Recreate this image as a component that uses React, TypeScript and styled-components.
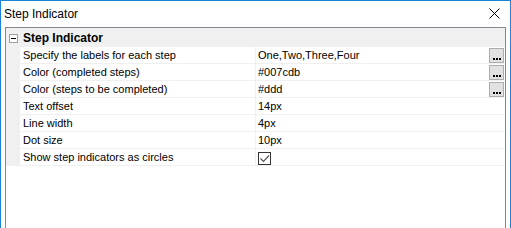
import styled, { createGlobalStyle } from 'styled-components'

const GlobalStyle = createGlobalStyle`
  html, body {
    margin: 0;
    padding: 0;
    background: #ffffff;
    overflow: hidden;
  }
  body {
    font-family: "Liberation Sans", Arial, sans-serif;
  }
`

const rows = [
  { label: 'Specify the labels for each step', value: 'One,Two,Three,Four', button: true },
  { label: 'Color (completed steps)', value: '#007cdb', button: true },
  { label: 'Color (steps to be completed)', value: '#ddd', button: true },
  { label: 'Text offset', value: '14px' },
  { label: 'Line width', value: '4px' },
  { label: 'Dot size', value: '10px' },
  { label: 'Show step indicators as circles', checkbox: true },
]

const App = () => {
  return (
    <Window>
      <GlobalStyle />
      <TitleBar>
        <Title>Step Indicator</Title>
        <CloseButton>
          <svg width="11" height="11" viewBox="0 0 11 11">
            <path d="M0.5 0.5 L10.5 10.5 M10.5 0.5 L0.5 10.5" stroke="#000" strokeWidth="1" />
          </svg>
        </CloseButton>
      </TitleBar>
      <Body>
        <Grid>
          <CategoryRow>
            <Gutter>
              <Toggle>
                <span />
              </Toggle>
            </Gutter>
            <CategoryLabel>Step Indicator</CategoryLabel>
          </CategoryRow>
          {rows.map((row) => (
            <Row key={row.label}>
              <Gutter />
              <LabelCell>{row.label}</LabelCell>
              <ValueCell>
                {row.checkbox ? (
                  <Checkbox>
                    <svg width="11" height="11" viewBox="0 0 11 11">
                      <path d="M1.5 5.5 L4.5 8.5 L10 2.5" stroke="#555" strokeWidth="1.2" fill="none" />
                    </svg>
                  </Checkbox>
                ) : (
                  <ValueText>{row.value}</ValueText>
                )}
                {row.button && (
                  <EllipsisButton>
                    <Dot />
                    <Dot />
                    <Dot />
                  </EllipsisButton>
                )}
              </ValueCell>
            </Row>
          ))}
        </Grid>
      </Body>
    </Window>
  )
}

const Window = styled.div`
  width: 511px;
  height: 228px;
  box-sizing: border-box;
  border: 1px solid #1883d7;
  border-bottom: none;
  background: #ffffff;
  display: flex;
  flex-direction: column;
`

const TitleBar = styled.div`
  height: 26px;
  display: flex;
  align-items: center;
  justify-content: space-between;
  padding: 0 10px 0 3px;
`

const Title = styled.div`
  font-size: 12px;
  color: #000;
  margin-top: -1px;
`

const CloseButton = styled.div`
  display: flex;
  align-items: center;
  margin-top: -1px;
`

const Body = styled.div`
  flex: 1;
  display: flex;
  padding: 0 4px 0 4px;
`

const Grid = styled.div`
  flex: 1;
  border: 1px solid #828790;
  border-bottom: none;
  background: #ffffff;
  font-size: 11px;
  color: #000;
`

const Row = styled.div`
  display: flex;
  height: 16px;
  border-bottom: 1px solid #f0f0f0;
`

const CategoryRow = styled(Row)`
  background: #f0f0f0;
  border-bottom-color: #f0f0f0;
  height: 18px;
`

const Gutter = styled.div`
  width: 14px;
  flex: none;
  background: #f0f0f0;
  display: flex;
  align-items: center;
  justify-content: center;
`

const Toggle = styled.div`
  width: 9px;
  height: 9px;
  box-sizing: border-box;
  border: 1px solid #a0a0a0;
  background: #fff;
  display: flex;
  align-items: center;
  justify-content: center;
  margin-top: 2px;

  span {
    width: 5px;
    height: 1px;
    background: #000;
  }
`

const CategoryLabel = styled.div`
  font-weight: bold;
  font-size: 12px;
  padding-left: 3px;
  line-height: 18px;
  margin-top: 1px;
`

const LabelCell = styled.div`
  width: 236px;
  flex: none;
  box-sizing: border-box;
  padding-left: 3px;
  border-right: 1px solid #f0f0f0;
  line-height: 16px;
  white-space: nowrap;
`

const ValueCell = styled.div`
  flex: 1;
  display: flex;
  align-items: center;
  justify-content: space-between;
  padding: 0 1px 0 2px;
`

const ValueText = styled.span`
  line-height: 16px;
`

const Checkbox = styled.div`
  width: 13px;
  height: 13px;
  box-sizing: border-box;
  border: 1px solid #333;
  display: flex;
  align-items: center;
  justify-content: center;
  margin-top: 2px;
`

const EllipsisButton = styled.div`
  width: 15px;
  height: 15px;
  box-sizing: border-box;
  border: 1px solid #adadad;
  background: #e1e1e1;
  display: flex;
  align-items: flex-end;
  justify-content: center;
  gap: 1px;
  padding-bottom: 2px;
  margin-top: 1px;
`

const Dot = styled.span`
  width: 2px;
  height: 2px;
  background: #000;
`

export default App
